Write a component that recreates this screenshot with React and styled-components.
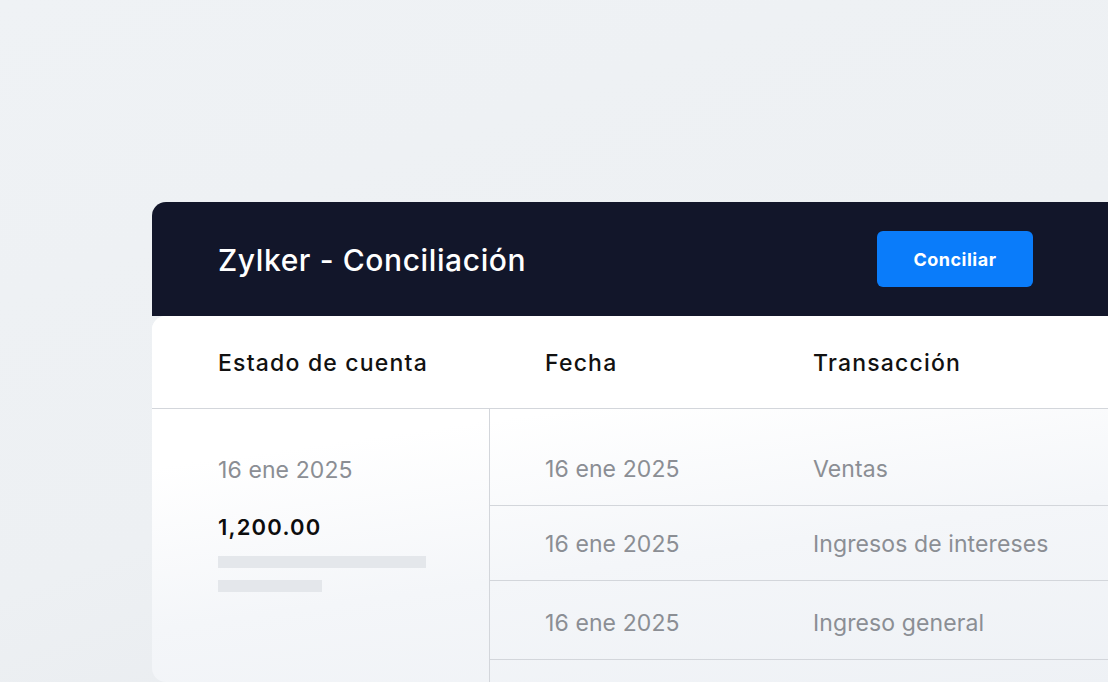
import React from "react";
import styled, { createGlobalStyle } from "styled-components";

const GlobalStyle = createGlobalStyle`
  html, body {
    margin: 0;
    padding: 0;
  }
  body {
    font-family: "Inter", "Noto Sans", sans-serif;
    -webkit-font-smoothing: antialiased;
  }
`;

const Page = styled.div`
  width: 1108px;
  height: 682px;
  overflow: hidden;
  box-sizing: border-box;
  padding: 202px 0 0 152px;
  background: linear-gradient(160deg, #eff2f5 0%, #edf0f3 55%, #e5e8ec 100%);
`;

const Card = styled.div`
  width: 1000px;
  display: flex;
  flex-direction: column;
`;

const Header = styled.div`
  height: 114px;
  box-sizing: border-box;
  padding: 2px 75px 0 66px;
  display: flex;
  align-items: center;
  background: #12162a;
  border-radius: 14px 14px 0 0;
`;

const Title = styled.h1`
  margin: 0;
  font-size: 30px;
  font-weight: 500;
  color: #ffffff;
  letter-spacing: 0.6px;
`;

const ReconcileButton = styled.button`
  margin: -2px 44px 0 auto;
  width: 156px;
  height: 56px;
  border: none;
  border-radius: 6px;
  background: #0a7cfa;
  color: #ffffff;
  font-family: inherit;
  font-size: 18px;
  font-weight: 700;
  letter-spacing: 0.5px;
  cursor: pointer;
`;

const Body = styled.div`
  border-radius: 14px 0 0 14px;
  overflow: hidden;
  background: linear-gradient(172deg, #ffffff 0%, #ffffff 30%, #f4f6f9 62%, #eef1f5 100%);
  height: 366px;
`;

const HeadRow = styled.div`
  height: 92px;
  display: grid;
  grid-template-columns: 338px 1fr;
  align-items: center;
  background: #ffffff;
  border-bottom: 1px solid #d3d6db;
`;

const HeadRight = styled.div`
  display: grid;
  grid-template-columns: 268px 1fr;
  padding-left: 55px;
`;

const HeadCell = styled.div`
  font-size: 23px;
  font-weight: 500;
  color: #111111;
  padding: 2px 0 0 ${(p) => p.$pad || 0}px;
  letter-spacing: 1.2px;
`;

const Columns = styled.div`
  display: grid;
  grid-template-columns: 338px 1fr;
  height: 100%;
`;

const Statement = styled.div`
  border-right: 1px solid #d3d6db;
  padding: 47px 0 0 66px;
  display: flex;
  flex-direction: column;
`;

const MutedText = styled.div`
  font-size: 23px;
  font-weight: 400;
  color: #8b8e94;
  line-height: 28px;
  letter-spacing: 0.1px;
`;

const Amount = styled.div`
  margin-top: 30px;
  font-size: 22px;
  font-weight: 600;
  color: #0d0d0d;
  line-height: 26px;
  letter-spacing: 1.2px;
`;

const Skeleton = styled.div`
  width: ${(p) => p.$w}px;
  height: 12px;
  background: #e4e7eb;
  margin-top: ${(p) => p.$top}px;
`;

const Rows = styled.div`
  display: flex;
  flex-direction: column;
`;

const Row = styled.div`
  height: ${(p) => p.$h}px;
  box-sizing: border-box;
  display: grid;
  grid-template-columns: 268px 1fr;
  align-items: end;
  padding: 0 0 22px 55px;
  border-bottom: 1px solid #d3d6db;
`;

const rows = [
  { h: 97, date: "16 ene 2025", name: "Ventas" },
  { h: 75, date: "16 ene 2025", name: "Ingresos de intereses" },
  { h: 79, date: "16 ene 2025", name: "Ingreso general" },
];

export default function App() {
  return (
    <>
      <GlobalStyle />
      <Page>
        <Card>
          <Header>
            <Title>Zylker - Conciliación</Title>
            <ReconcileButton>Conciliar</ReconcileButton>
          </Header>
          <Body>
            <HeadRow>
              <HeadCell $pad={66}>Estado de cuenta</HeadCell>
              <HeadRight>
                <HeadCell>Fecha</HeadCell>
                <HeadCell>Transacción</HeadCell>
              </HeadRight>
            </HeadRow>
            <Columns>
              <Statement>
                <MutedText>16 ene 2025</MutedText>
                <Amount>1,200.00</Amount>
                <Skeleton $w={208} $top={16} />
                <Skeleton $w={104} $top={12} />
              </Statement>
              <Rows>
                {rows.map((r, i) => (
                  <Row key={i} $h={r.h}>
                    <MutedText>{r.date}</MutedText>
                    <MutedText>{r.name}</MutedText>
                  </Row>
                ))}
              </Rows>
            </Columns>
          </Body>
        </Card>
      </Page>
    </>
  );
}
